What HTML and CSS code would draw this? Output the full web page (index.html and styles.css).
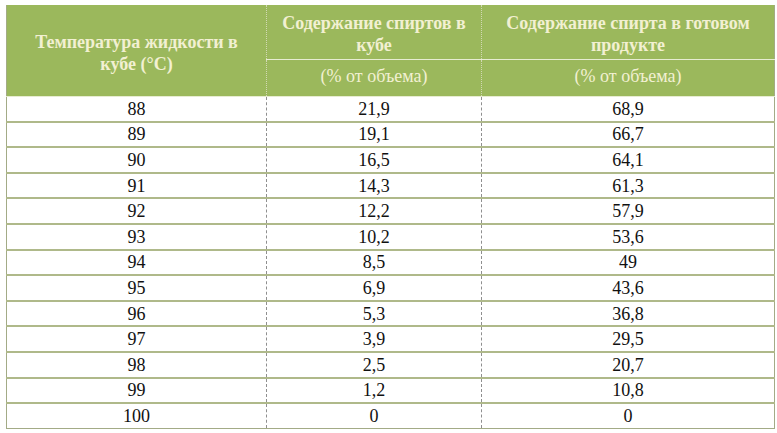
FILE: index.html
```html
<!DOCTYPE html>
<html lang="ru">
<head>
<meta charset="utf-8">
<link rel="stylesheet" href="styles.css">
</head>
<body>
<div class="wrap">
<table class="tbl">
  <colgroup>
    <col class="c1"><col class="c2"><col class="c3">
  </colgroup>
  <thead>
    <tr class="h1">
      <th rowspan="2" class="first">Температура жидкости в кубе (°С)</th>
      <th class="top">Содержание спиртов в кубе</th>
      <th class="top">Содержание спирта в готовом продукте</th>
    </tr>
    <tr class="h2">
      <th class="sub">(% от объема)</th>
      <th class="sub">(% от объема)</th>
    </tr>
  </thead>
  <tbody>
    <tr><td>88</td><td>21,9</td><td>68,9</td></tr>
    <tr><td>89</td><td>19,1</td><td>66,7</td></tr>
    <tr><td>90</td><td>16,5</td><td>64,1</td></tr>
    <tr><td>91</td><td>14,3</td><td>61,3</td></tr>
    <tr><td>92</td><td>12,2</td><td>57,9</td></tr>
    <tr><td>93</td><td>10,2</td><td>53,6</td></tr>
    <tr><td>94</td><td>8,5</td><td>49</td></tr>
    <tr><td>95</td><td>6,9</td><td>43,6</td></tr>
    <tr><td>96</td><td>5,3</td><td>36,8</td></tr>
    <tr><td>97</td><td>3,9</td><td>29,5</td></tr>
    <tr><td>98</td><td>2,5</td><td>20,7</td></tr>
    <tr><td>99</td><td>1,2</td><td>10,8</td></tr>
    <tr><td>100</td><td>0</td><td>0</td></tr>
  </tbody>
</table>
</div>
</body>
</html>
```

FILE: styles.css
```css
html, body {
  margin: 0;
  padding: 0;
  background: #ffffff;
}
.wrap {
  padding: 5px 0 0 6px;
}
.tbl {
  border-collapse: collapse;
  table-layout: fixed;
  width: 768px;
  font-family: "Liberation Serif", "DejaVu Serif", "Times New Roman", serif;
  font-size: 18px;
  color: #111111;
  border-left: 1px solid #a3ab86;
  border-right: 1px solid #a3ab86;
  border-bottom: 1px solid #a3ab86;
}
.c1 { width: 260px; }
.c2 { width: 215px; }
.c3 { width: 293px; }
.tbl th {
  background: #9bb85c;
  color: #f2f0d2;
  font-weight: bold;
  line-height: 22px;
  text-align: center;
  padding: 0 6px;
  border-left: 1px dotted #d2d9b4;
}
.tbl th.first {
  border-left: none;
  vertical-align: middle;
  padding: 6px 16px 0;
  border-bottom: 1px solid #e7ecd2;
}
.tbl .h1 th.top {
  height: 54px;
  vertical-align: top;
  padding-top: 7px;
  border-bottom: 1px solid #e7ecd2;
  box-sizing: border-box;
}
.tbl .h2 th.sub {
  height: 37px;
  font-weight: normal;
  vertical-align: middle;
  padding-bottom: 4px;
  box-sizing: border-box;
  border-bottom: 1px solid #e7ecd2;
}
.tbl td {
  height: 25.6px;
  padding: 0;
  text-align: center;
  vertical-align: middle;
  border-top: 2px solid #afb98a;
  border-left: 1px dashed #8f8f8f;
  line-height: 20px;
  box-sizing: border-box;
}
.tbl td:first-child {
  border-left: none;
}
.tbl tbody tr:first-child td {
  border-top: none;
}
```
